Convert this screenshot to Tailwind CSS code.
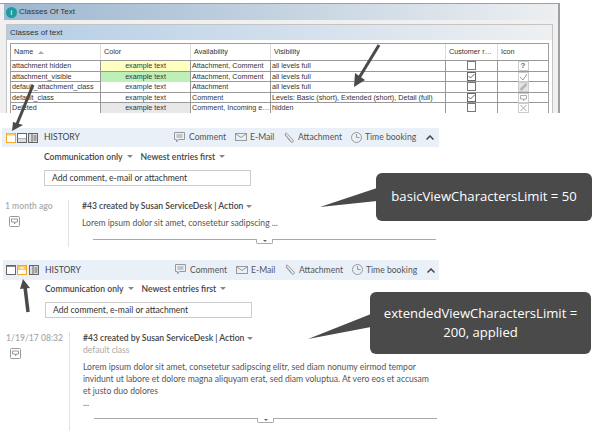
<!DOCTYPE html>
<html lang="en">
<head>
  <meta charset="UTF-8" />
  <title>Classes of text</title>
  <script src="https://cdn.jsdelivr.net/npm/@tailwindcss/browser@4"></script>
</head>
<body class="relative w-[600px] h-[431px] overflow-hidden bg-white font-['Lato',sans-serif] text-[#444] whitespace-nowrap">

  <!-- dialog -->
  <section class="h-[110px] w-[560px] mt-[3px] border-t border-r-2 border-[#a0a0a0] bg-[#f0f0f0] overflow-hidden font-['Liberation_Sans',sans-serif] text-[7.2px] text-[#333]">
    <div class="ml-[4px] mr-[2px] h-[16px] flex items-center gap-[2px] pl-[2px] bg-gradient-to-r from-[#9db7d0] to-[#eceff1] text-[8px]">
      <span class="w-[11px] h-[11px] rounded-full bg-[#1d9c9c] text-white text-[8px] leading-[11px] text-center">i</span>
      <span>Classes Of Text</span>
    </div>
    <div class="mt-[4px] ml-[6px] mr-[5px] h-[92px] border border-[#c4c4c4] bg-white">
      <div class="h-[15px] flex items-center pl-[3px] bg-gradient-to-r from-[#b4cde6] to-[#eef0f2] text-[8px]">Classes of text</div>
      <div class="ml-[3px] mt-[3px] w-[539px] border-t border-x border-[#a0a0a0]">
        <div class="grid grid-cols-[90px_90px_80px_175px_52px_1fr] h-[17px] border-b border-[#999] items-center">
          <span class="pl-[3px] border-r border-[#ddd] h-full flex items-center gap-[5px]">Name <i class="w-0 h-0 border-x-[3px] border-x-transparent border-b-[3px] border-b-[#aaa]"></i></span>
          <span class="pl-[3px] border-r border-[#ddd] h-full flex items-center">Color</span>
          <span class="pl-[3px] border-r border-[#ddd] h-full flex items-center">Availability</span>
          <span class="pl-[3px] border-r border-[#ddd] h-full flex items-center">Visibility</span>
          <span class="pl-[3px] border-r border-[#ddd] h-full flex items-center">Customer r…</span>
          <span class="pl-[3px] h-full flex items-center">Icon</span>
        </div>
        <div class="grid grid-cols-[90px_90px_80px_175px_52px_1fr] h-[10.5px] border-b border-[#999] leading-[9.500px]">
          <span class="pl-[1px] border-r border-[#999]">attachment hidden</span>
          <span class="border-r border-[#999] bg-[#ffffc0] text-center">example text</span>
          <span class="pl-[1px] border-r border-[#999]">Attachment, Comment</span>
          <span class="pl-[1px] border-r border-[#999]">all levels full</span>
          <span class="border-r border-[#999] flex justify-center"><i class="w-[9px] h-[9px] border border-[#777]"></i></span>
          <span class="flex justify-center"><i class="w-[11px] h-[10px] border border-[#ccc] text-center not-italic font-bold text-[8px] leading-[8px] text-[#666]">?</i></span>
        </div>
        <div class="grid grid-cols-[90px_90px_80px_175px_52px_1fr] h-[10.5px] border-b border-[#999] leading-[9.500px]">
          <span class="pl-[1px] border-r border-[#999]">attachment_visible</span>
          <span class="border-r border-[#999] bg-[#bdf0b8] text-center">example text</span>
          <span class="pl-[1px] border-r border-[#999]">Attachment, Comment</span>
          <span class="pl-[1px] border-r border-[#999]">all levels full</span>
          <span class="border-r border-[#999] flex justify-center"><svg width="9" height="9" viewBox="0 0 9 9" fill="none" stroke="#666"><rect x=".5" y=".5" width="8" height="8"/><path d="M1.500 4l2 2 4-4"/></svg></span>
          <span class="flex justify-center"><svg width="11" height="10" viewBox="0 0 11 10" fill="none" stroke="#999"><rect x=".5" y=".5" width="10" height="9" stroke="#ccc"/><path d="M2 5l3 3 4-6"/></svg></span>
        </div>
        <div class="grid grid-cols-[90px_90px_80px_175px_52px_1fr] h-[10.5px] border-b border-[#999] leading-[9.500px]">
          <span class="pl-[1px] border-r border-[#999]">default_attachment_class</span>
          <span class="border-r border-[#999] text-center">example text</span>
          <span class="pl-[1px] border-r border-[#999]">Attachment</span>
          <span class="pl-[1px] border-r border-[#999]">all levels full</span>
          <span class="border-r border-[#999] flex justify-center"><i class="w-[9px] h-[9px] border border-[#777]"></i></span>
          <span class="flex justify-center"><svg width="11" height="10" viewBox="0 0 11 10" fill="none"><rect x=".5" y=".5" width="10" height="9" fill="#e4e4e4" stroke="#ccc"/><path d="M2.500 8l6-6" stroke="#b5b5b5" stroke-width="2.500"/></svg></span>
        </div>
        <div class="grid grid-cols-[90px_90px_80px_175px_52px_1fr] h-[10.5px] border-b border-[#999] leading-[9.500px]">
          <span class="pl-[1px] border-r border-[#999]">default_class</span>
          <span class="border-r border-[#999] text-center">example text</span>
          <span class="pl-[1px] border-r border-[#999]">Comment</span>
          <span class="pl-[1px] border-r border-[#999]">Levels: Basic (short), Extended (short), Detail (full)</span>
          <span class="border-r border-[#999] flex justify-center"><svg width="9" height="9" viewBox="0 0 9 9" fill="none" stroke="#666"><rect x=".5" y=".5" width="8" height="8"/><path d="M1.500 4l2 2 4-4"/></svg></span>
          <span class="flex justify-center"><svg width="11" height="10" viewBox="0 0 11 10" fill="none" stroke="#aaa"><rect x=".5" y=".5" width="10" height="9" stroke="#ccc"/><path d="M2.500 2.500h6v3.500h-2l-1 2v-2h-3z"/></svg></span>
        </div>
        <div class="grid grid-cols-[90px_90px_80px_175px_52px_1fr] h-[10.5px] leading-[9.500px]">
          <span class="pl-[1px] border-r border-[#999]">Deleted</span>
          <span class="border-r border-[#999] bg-[#e8e8e8] text-center">example text</span>
          <span class="pl-[1px] border-r border-[#999]">Comment, Incoming e…</span>
          <span class="pl-[1px] border-r border-[#999]">hidden</span>
          <span class="border-r border-[#999] flex justify-center"><i class="w-[9px] h-[9px] border border-[#777]"></i></span>
          <span class="flex justify-center"><svg width="11" height="10" viewBox="0 0 11 10" fill="none" stroke="#aaa"><rect x=".5" y=".5" width="10" height="9" stroke="#ccc"/><path d="M2.500 2l6 6M8.500 2l-6 6"/></svg></span>
        </div>
      </div>
    </div>
  </section>

  <!-- basic view -->
  <section class="mt-[15px]">
    <div class="ml-[2px] w-[437px] h-[19px] bg-[#e9f0f8] flex items-center text-[8.6px] text-[#555]">
      <svg class="ml-[4px] shrink-0" width="33" height="10" viewBox="0 0 33 10" fill="none">
        <rect x=".5" y=".5" width="9" height="9" stroke="#f5a623" fill="#fff"/><path d="M1 1.500h8" stroke="#f9c764" stroke-width="2"/>
        <rect x="11.500" y=".5" width="9" height="9" stroke="#666" fill="#fff"/><path d="M12 6h8" stroke="#666"/><rect x="12" y="6" width="8" height="3" fill="#ddd"/>
        <rect x="22.500" y=".5" width="9" height="9" stroke="#666" fill="#ddd"/><path d="M26 1v8M27.500 3h3M27.500 5h3M27.500 7h3" stroke="#666"/>
      </svg>
      <span class="ml-[5px] w-[130px] text-[#444]">HISTORY</span>
      <span class="flex items-center gap-[4px] w-[61px]"><svg width="11" height="11" viewBox="0 0 11 11" fill="none" stroke="#999"><path d="M.5 .5h10v7h-6l-2 2.500v-2.500h-2z"/><path d="M2.500 3h6M2.500 5h6"/></svg>Comment</span>
      <span class="flex items-center gap-[3px] w-[49px]"><svg width="12" height="8" viewBox="0 0 12 8" fill="none" stroke="#999"><rect x=".5" y=".5" width="11" height="7"/><path d="M1 1l5 3.500L11 1"/></svg>E-Mail</span>
      <span class="flex items-center gap-[4px] w-[67px]"><svg width="10" height="11" viewBox="0 0 10 11" fill="none" stroke="#999"><path d="M1 3l6 7c2 1 3-1 2-2L3 1.500C2 .5 0.500 1.500 1.500 3l5 5.500"/></svg>Attachment</span>
      <span class="flex items-center gap-[3px] w-[75px]"><svg width="11" height="11" viewBox="0 0 11 11" fill="none" stroke="#999"><circle cx="5.500" cy="5.500" r="5"/><path d="M5.500 2v3.500h3"/></svg>Time booking</span>
      <svg width="8" height="5" viewBox="0 0 8 5" fill="none" stroke="#444" stroke-width="1.500"><path d="M.5 4.500L4 1l3.500 3.500"/></svg>
    </div>
    <div class="pl-[44px] mt-[3px] h-[14px] flex items-center gap-[8px] text-[8.6px] font-semibold text-[#444]">
      <span class="flex items-center gap-[4px]">Communication only <i class="w-0 h-0 border-x-[3px] border-x-transparent border-t-[3px] border-t-[#888]"></i></span>
      <span class="flex items-center gap-[4px]">Newest entries first <i class="w-0 h-0 border-x-[3px] border-x-transparent border-t-[3px] border-t-[#888]"></i></span>
    </div>
    <div class="ml-[44px] mt-[6px] w-[207px] h-[16px] border border-[#ccc] pl-[7px] flex items-center text-[8.6px] text-[#333]">Add comment, e-mail or attachment</div>
    <div class="mt-[14px] flex h-[47px]">
      <div class="w-[69px] pl-[5px] border-r border-[#e2e2e2] text-[8.6px] leading-[12px] font-semibold text-[#aaa]">
        1 month ago
        <svg class="ml-[4px] mt-[4px]" width="11" height="11" viewBox="0 0 11 11" fill="none" stroke="#999"><rect x=".5" y=".5" width="10" height="10" rx="1"/><path d="M2.500 3h6v3h-2l-1 2v-2h-3z"/></svg>
      </div>
      <div class="pl-[13px] w-[368px] text-[#555]">
        <div class="text-[8.6px] leading-[12px] font-semibold flex items-center gap-[3px] text-[#444]">#43 created by Susan ServiceDesk | Action <i class="w-0 h-0 border-x-[3px] border-x-transparent border-t-[3px] border-t-[#888]"></i></div>
        <p class="mt-[5px] text-[8.6px] leading-[12px]">Lorem ipsum dolor sit amet, consetetur sadipscing ...</p>
        <div class="ml-[11px] mt-[10px] w-[343px] border-t border-[#aaa] relative">
          <span class="absolute left-[163px] -top-[1px] w-[17px] h-[5px] bg-white border border-t-0 border-[#aaa] rounded-b-[2px] flex justify-center"><i class="mt-[1px] w-0 h-0 border-x-[2px] border-x-transparent border-t-[2px] border-t-[#666]"></i></span>
        </div>
      </div>
    </div>
  </section>

  <!-- extended view -->
  <section class="mt-[13px]">
    <div class="ml-[3px] w-[436px] h-[20px] bg-[#e9f0f8] flex items-center text-[8.6px] text-[#555]">
      <svg class="ml-[3px] shrink-0" width="34" height="10" viewBox="0 0 34 10" fill="none">
        <rect x=".5" y=".5" width="9" height="9" stroke="#666" fill="#fff"/><path d="M1 1.500h8" stroke="#888"/>
        <rect x="11.500" y=".5" width="9" height="9" stroke="#f5a623" fill="#fff"/><rect x="12" y="1" width="8" height="4" fill="#f9c764"/><path d="M14 3h4" stroke="#fff"/>
        <rect x="23.500" y=".5" width="9" height="9" stroke="#666" fill="#ddd"/><path d="M27 1v8M28.500 3h3M28.500 5h3M28.500 7h3" stroke="#666"/>
      </svg>
      <span class="ml-[5px] w-[130px] text-[#444]">HISTORY</span>
      <span class="flex items-center gap-[4px] w-[61px]"><svg width="11" height="11" viewBox="0 0 11 11" fill="none" stroke="#999"><path d="M.5 .5h10v7h-6l-2 2.500v-2.500h-2z"/><path d="M2.500 3h6M2.500 5h6"/></svg>Comment</span>
      <span class="flex items-center gap-[3px] w-[49px]"><svg width="12" height="8" viewBox="0 0 12 8" fill="none" stroke="#999"><rect x=".5" y=".5" width="11" height="7"/><path d="M1 1l5 3.500L11 1"/></svg>E-Mail</span>
      <span class="flex items-center gap-[4px] w-[67px]"><svg width="10" height="11" viewBox="0 0 10 11" fill="none" stroke="#999"><path d="M1 3l6 7c2 1 3-1 2-2L3 1.500C2 .5 0.500 1.500 1.500 3l5 5.500"/></svg>Attachment</span>
      <span class="flex items-center gap-[3px] w-[75px]"><svg width="11" height="11" viewBox="0 0 11 11" fill="none" stroke="#999"><circle cx="5.500" cy="5.500" r="5"/><path d="M5.500 2v3.500h3"/></svg>Time booking</span>
      <svg width="8" height="5" viewBox="0 0 8 5" fill="none" stroke="#444" stroke-width="1.500"><path d="M.5 4.500L4 1l3.500 3.500"/></svg>
    </div>
    <div class="pl-[45px] mt-[2px] h-[14px] flex items-center gap-[8px] text-[8.6px] font-semibold text-[#444]">
      <span class="flex items-center gap-[4px]">Communication only <i class="w-0 h-0 border-x-[3px] border-x-transparent border-t-[3px] border-t-[#888]"></i></span>
      <span class="flex items-center gap-[4px]">Newest entries first <i class="w-0 h-0 border-x-[3px] border-x-transparent border-t-[3px] border-t-[#888]"></i></span>
    </div>
    <div class="ml-[45px] mt-[6px] w-[207px] h-[16px] border border-[#ccc] pl-[7px] flex items-center text-[8.6px] text-[#333]">Add comment, e-mail or attachment</div>
    <div class="mt-[14px] flex h-[99px]">
      <div class="w-[70px] pl-[6px] border-r border-[#e2e2e2] text-[8.6px] leading-[12px] font-semibold text-[#aaa]">
        1/19/17 08:32
        <svg class="ml-[4px] mt-[4px]" width="11" height="11" viewBox="0 0 11 11" fill="none" stroke="#999"><rect x=".5" y=".5" width="10" height="10" rx="1"/><path d="M2.500 3h6v3h-2l-1 2v-2h-3z"/></svg>
      </div>
      <div class="pl-[13px] w-[368px] text-[#555]">
        <div class="text-[8.6px] leading-[12px] font-semibold flex items-center gap-[3px] text-[#444]">#43 created by Susan ServiceDesk | Action <i class="w-0 h-0 border-x-[3px] border-x-transparent border-t-[3px] border-t-[#888]"></i></div>
        <div class="text-[8.6px] leading-[12px] text-[#aaa]">default class</div>
        <p class="mt-[5px] text-[8.6px] leading-[12px]">Lorem ipsum dolor sit amet, consetetur sadipscing elitr, sed diam nonumy eirmod tempor<br />invidunt ut labore et dolore magna aliquyam erat, sed diam voluptua. At vero eos et accusam<br />et justo duo dolores<br />...</p>
        <div class="ml-[11px] mt-[9px] w-[343px] border-t border-[#aaa] relative">
          <span class="absolute left-[163px] -top-[1px] w-[17px] h-[5px] bg-white border border-t-0 border-[#aaa] rounded-b-[2px] flex justify-center"><i class="mt-[1px] w-0 h-0 border-x-[2px] border-x-transparent border-t-[2px] border-t-[#666]"></i></span>
        </div>
      </div>
    </div>
  </section>

  <!-- callouts and arrows laid over the screenshot -->
  <div class="absolute left-[376px] top-[173px] w-[216px] h-[48px] rounded-[6px] bg-[#4a4a4a] text-white font-['Open_Sans',sans-serif] text-[13.1px] flex items-center justify-center">basicViewCharactersLimit = 50</div>
  <div class="absolute left-[370px] top-[292px] w-[221px] h-[62px] rounded-[6px] bg-[#4a4a4a] text-white font-['Open_Sans',sans-serif] text-[13.1px] leading-[19px] flex items-center justify-center text-center">extendedViewCharactersLimit =<br />200, applied</div>
  <svg class="absolute left-0 top-0 pointer-events-none" width="600" height="431" viewBox="0 0 600 431" fill="none">
    <path d="M377 188L320 207L377 201z" fill="#4a4a4a"/>
    <path d="M371 314L308 339L371 327z" fill="#4a4a4a"/>
    <path d="M33 85L17 124" stroke="#4a4a4a" stroke-width="3"/>
    <path d="M12 131l1-9 10 3z" fill="#4a4a4a"/>
    <path d="M379 45L359 78" stroke="#4a4a4a" stroke-width="3"/>
    <path d="M354 87l1-14 10 7z" fill="#4a4a4a"/>
    <path d="M28 312L25 287" stroke="#4a4a4a" stroke-width="3.500"/>
    <path d="M23 279l-3 10 10-1z" fill="#4a4a4a"/>
  </svg>
</body>
</html>
